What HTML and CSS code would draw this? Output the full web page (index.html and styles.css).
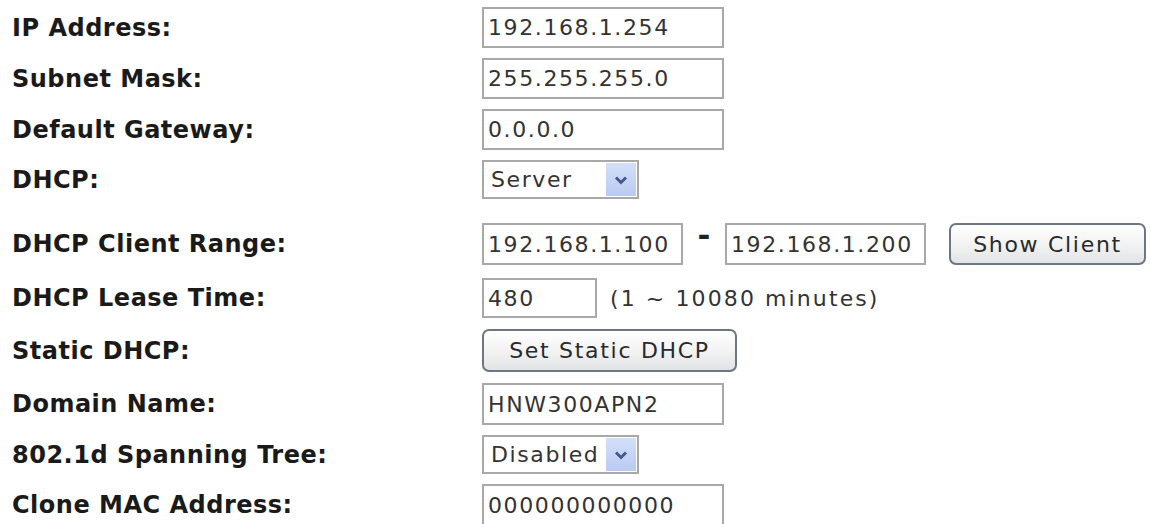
FILE: index.html
```html
<!DOCTYPE html>
<html lang="en">

<head>
    <meta charset="UTF-8">
    <title>LAN Setup</title>
    <link rel="stylesheet" href="styles.css">
</head>

<body>

    <div class="lan-form">
        <div class="row">
            <label class="label">IP Address:</label>
            <input class="field" type="text" value="192.168.1.254">
        </div>
        <div class="row">
            <label class="label">Subnet Mask:</label>
            <input class="field" type="text" value="255.255.255.0">
        </div>
        <div class="row">
            <label class="label">Default Gateway:</label>
            <input class="field" type="text" value="0.0.0.0">
        </div>
        <div class="row">
            <label class="label">DHCP:</label>
            <div class="select">
                <select>
                    <option>Server</option>
                    <option>Client</option>
                    <option>Disabled</option>
                </select>
                <span class="select-arrow">
                    <svg width="14" height="10" viewBox="0 0 14 10"><path d="M2 2.5 L7 7.5 L12 2.5" fill="none" stroke="#46598a" stroke-width="3"/></svg>
                </span>
            </div>
        </div>

        <!-- client range: start, dash, end and the client list button -->
        <div class="row row-range">
            <label class="label">DHCP Client Range:</label>
            <input class="field field-range" type="text" value="192.168.1.100">
            <span class="dash">-</span>
            <input class="field field-range" type="text" value="192.168.1.200">
            <button class="btn btn-client" type="button">Show Client</button>
        </div>
        <div class="row row-lease">
            <label class="label">DHCP Lease Time:</label>
            <input class="field field-short" type="text" value="480">
            <span class="hint">(1 ~ 10080 minutes)</span>
        </div>
        <div class="row row-loose">
            <label class="label">Static DHCP:</label>
            <button class="btn btn-static" type="button">Set Static DHCP</button>
        </div>
        <div class="row row-loose">
            <label class="label">Domain Name:</label>
            <input class="field field-tall" type="text" value="HNW300APN2">
        </div>
        <div class="row">
            <label class="label">802.1d Spanning Tree:</label>
            <div class="select">
                <select>
                    <option>Disabled</option>
                    <option>Enabled</option>
                </select>
                <span class="select-arrow">
                    <svg width="14" height="10" viewBox="0 0 14 10"><path d="M2 2.5 L7 7.5 L12 2.5" fill="none" stroke="#46598a" stroke-width="3"/></svg>
                </span>
            </div>
        </div>
        <div class="row">
            <label class="label">Clone MAC Address:</label>
            <input class="field field-tall" type="text" value="000000000000">
        </div>
    </div>

</body>

</html>
```

FILE: styles.css
```css
/* General Reset */
* {
    margin: 0;
    padding: 0;
    box-sizing: border-box;
}

body {
    font-family: "DejaVu Sans", Verdana, sans-serif;
    background-color: #fff;
    color: #1c1c1c;
}

/* Form layout: one flex row per setting */
.lan-form {
    display: flex;
    flex-direction: column;
    gap: 10px;
    padding: 7px 0 0 12px;
}

.row {
    display: flex;
    align-items: center;
}

.row-range {
    margin-top: 14px;
}

.row-lease {
    margin-top: 3px;
}

.row-loose {
    margin-top: 1px;
}

.label {
    width: 470px;
    flex-shrink: 0;
    font-size: 24px;
    font-weight: bold;
    letter-spacing: 0.5px;
    color: #1a1a1a;
}

/* Text fields */
.field {
    width: 242px;
    height: 41px;
    border: 2px solid #a8a8a8;
    background: #fff;
    padding: 0 4px;
    font-family: inherit;
    font-size: 22px;
    letter-spacing: 1.6px;
    color: #333;
}

.field-tall {
    height: 42px;
}

.field-range {
    width: 201px;
    height: 42px;
}

.field-short {
    width: 115px;
    height: 40px;
}

/* the dash sits high, near the top of the fields */
.dash {
    align-self: flex-start;
    width: 42px;
    text-align: center;
    font-size: 31px;
    font-weight: bold;
    line-height: 24px;
    color: #222;
}

.hint {
    margin-left: 13px;
    font-size: 22px;
    letter-spacing: 2.1px;
    color: #333;
}

/* Drop-down boxes */
.select {
    position: relative;
    width: 157px;
    height: 39px;
}

.select select {
    appearance: none;
    -webkit-appearance: none;
    width: 100%;
    height: 100%;
    border: 2px solid #a8a8a8;
    background: #fff;
    padding: 0 7px;
    font-family: inherit;
    font-size: 22px;
    letter-spacing: 1.6px;
    color: #333;
}

.select-arrow {
    position: absolute;
    top: 3px;
    right: 3px;
    bottom: 3px;
    width: 30px;
    display: flex;
    align-items: center;
    justify-content: center;
    background: linear-gradient(#d3dff9, #bacbf2);
    pointer-events: none;
}

/* Buttons */
.btn {
    height: 43px;
    border: 2px solid #6c7784;
    border-radius: 7px;
    background: linear-gradient(#ffffff, #f3f3f3 50%, #e2e3e5);
    font-family: inherit;
    font-size: 22px;
    letter-spacing: 1.7px;
    color: #2a2a2a;
    cursor: pointer;
}

.btn-client {
    width: 197px;
    height: 42px;
    margin-left: 23px;
}

.btn-static {
    width: 255px;
}
```
